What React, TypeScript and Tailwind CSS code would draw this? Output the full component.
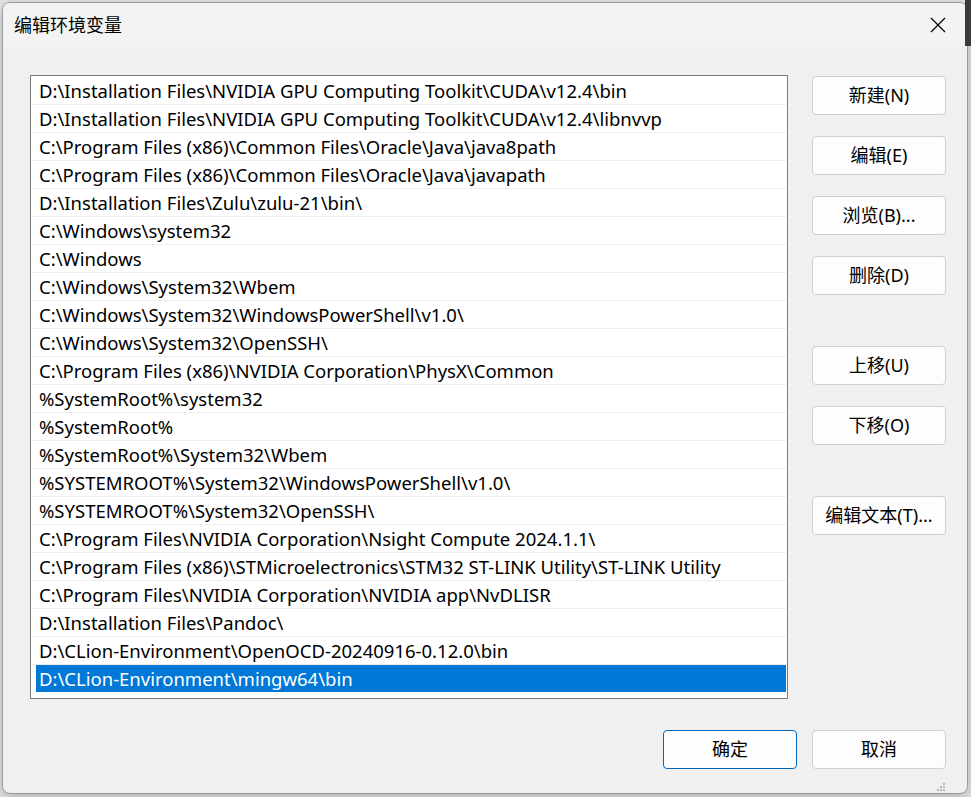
import React from "react";

const PATHS = [
  "D:\\Installation Files\\NVIDIA GPU Computing Toolkit\\CUDA\\v12.4\\bin",
  "D:\\Installation Files\\NVIDIA GPU Computing Toolkit\\CUDA\\v12.4\\libnvvp",
  "C:\\Program Files (x86)\\Common Files\\Oracle\\Java\\java8path",
  "C:\\Program Files (x86)\\Common Files\\Oracle\\Java\\javapath",
  "D:\\Installation Files\\Zulu\\zulu-21\\bin\\",
  "C:\\Windows\\system32",
  "C:\\Windows",
  "C:\\Windows\\System32\\Wbem",
  "C:\\Windows\\System32\\WindowsPowerShell\\v1.0\\",
  "C:\\Windows\\System32\\OpenSSH\\",
  "C:\\Program Files (x86)\\NVIDIA Corporation\\PhysX\\Common",
  "%SystemRoot%\\system32",
  "%SystemRoot%",
  "%SystemRoot%\\System32\\Wbem",
  "%SYSTEMROOT%\\System32\\WindowsPowerShell\\v1.0\\",
  "%SYSTEMROOT%\\System32\\OpenSSH\\",
  "C:\\Program Files\\NVIDIA Corporation\\Nsight Compute 2024.1.1\\",
  "C:\\Program Files (x86)\\STMicroelectronics\\STM32 ST-LINK Utility\\ST-LINK Utility",
  "C:\\Program Files\\NVIDIA Corporation\\NVIDIA app\\NvDLISR",
  "D:\\Installation Files\\Pandoc\\",
  "D:\\CLion-Environment\\OpenOCD-20240916-0.12.0\\bin",
  "D:\\CLion-Environment\\mingw64\\bin",
];

const FONT = {
  fontFamily: '"Noto Sans", "Noto Sans CJK SC", sans-serif',
};

function Btn({ label, primary = false }: { label: string; primary?: boolean }) {
  return (
    <button
      className={`flex h-[39px] w-[134px] items-center justify-center rounded-[4px] border bg-[#fdfdfd] text-[18px] text-black ${
        primary ? "border-[#0067c0]" : "border-[#d0d0d0]"
      }`}
    >
      {label}
    </button>
  );
}

export default function App() {
  const selected = PATHS.length - 1;
  return (
    <div className="relative h-[797px] w-[971px] overflow-hidden bg-[#e4e6ea]" style={FONT}>
      <div className="absolute right-0 top-0 h-[46px] w-[6px] bg-[#3a3a3a]" />
      <div className="ml-[2px] mt-[2px] flex h-[792px] w-[966px] flex-col overflow-hidden rounded-lg border border-[#9a9a9a] bg-[#f0f0f0] shadow-[0_4px_16px_rgba(0,0,0,0.25)]">
        {/* title bar */}
        <div className="flex h-[44px] shrink-0 items-center justify-between bg-[#f3f3f3] pl-[11px] pr-[21px]">
          <span className="pt-[1px] text-[18px] text-black">编辑环境变量</span>
          <svg width="16" height="16" viewBox="0 0 16 16" className="text-black">
            <path d="M1 1 L15 15 M15 1 L1 15" stroke="currentColor" strokeWidth="1.2" />
          </svg>
        </div>

        <div className="flex flex-1 flex-col pl-[27px] pr-[21px] pt-[28px]">
          <div className="flex gap-[24px]">
            {/* list */}
            <div className="h-[624px] w-[758px] border border-[#7a7a85] bg-white pl-[1px] pr-[1px] pt-[1px]">
              {PATHS.map((p, i) => (
                <div
                  key={i}
                  className={`flex h-[28px] items-center whitespace-nowrap border-b text-[18.5px] ${
                    i === selected
                      ? "ml-[4px] border-white bg-[#0078d7] pl-[3px] text-white"
                      : "border-[#ededed] pl-[7px] text-black"
                  }`}
                >
                  {p}
                </div>
              ))}
            </div>

            {/* side buttons */}
            <div className="flex flex-col pt-[1px]">
              <Btn label="新建(N)" />
              <div className="mt-[21px]">
                <Btn label="编辑(E)" />
              </div>
              <div className="mt-[21px]">
                <Btn label="浏览(B)..." />
              </div>
              <div className="mt-[21px]">
                <Btn label="删除(D)" />
              </div>
              <div className="mt-[51px]">
                <Btn label="上移(U)" />
              </div>
              <div className="mt-[21px]">
                <Btn label="下移(O)" />
              </div>
              <div className="mt-[51px]">
                <Btn label="编辑文本(T)..." />
              </div>
            </div>
          </div>

          <div className="mt-[31px] flex justify-end gap-[15px]">
            <Btn label="确定" primary />
            <Btn label="取消" />
          </div>

          {/* resize grip */}
          <div className="mt-auto flex justify-end pb-[1px]">
            <svg width="10" height="10" viewBox="0 0 10 10">
              <rect x="7" y="1" width="2" height="2" fill="#b8b8b8" />
              <rect x="4" y="4" width="2" height="2" fill="#b8b8b8" />
              <rect x="7" y="4" width="2" height="2" fill="#b8b8b8" />
              <rect x="1" y="7" width="2" height="2" fill="#b8b8b8" />
              <rect x="4" y="7" width="2" height="2" fill="#b8b8b8" />
              <rect x="7" y="7" width="2" height="2" fill="#b8b8b8" />
            </svg>
          </div>
        </div>
      </div>
    </div>
  );
}
